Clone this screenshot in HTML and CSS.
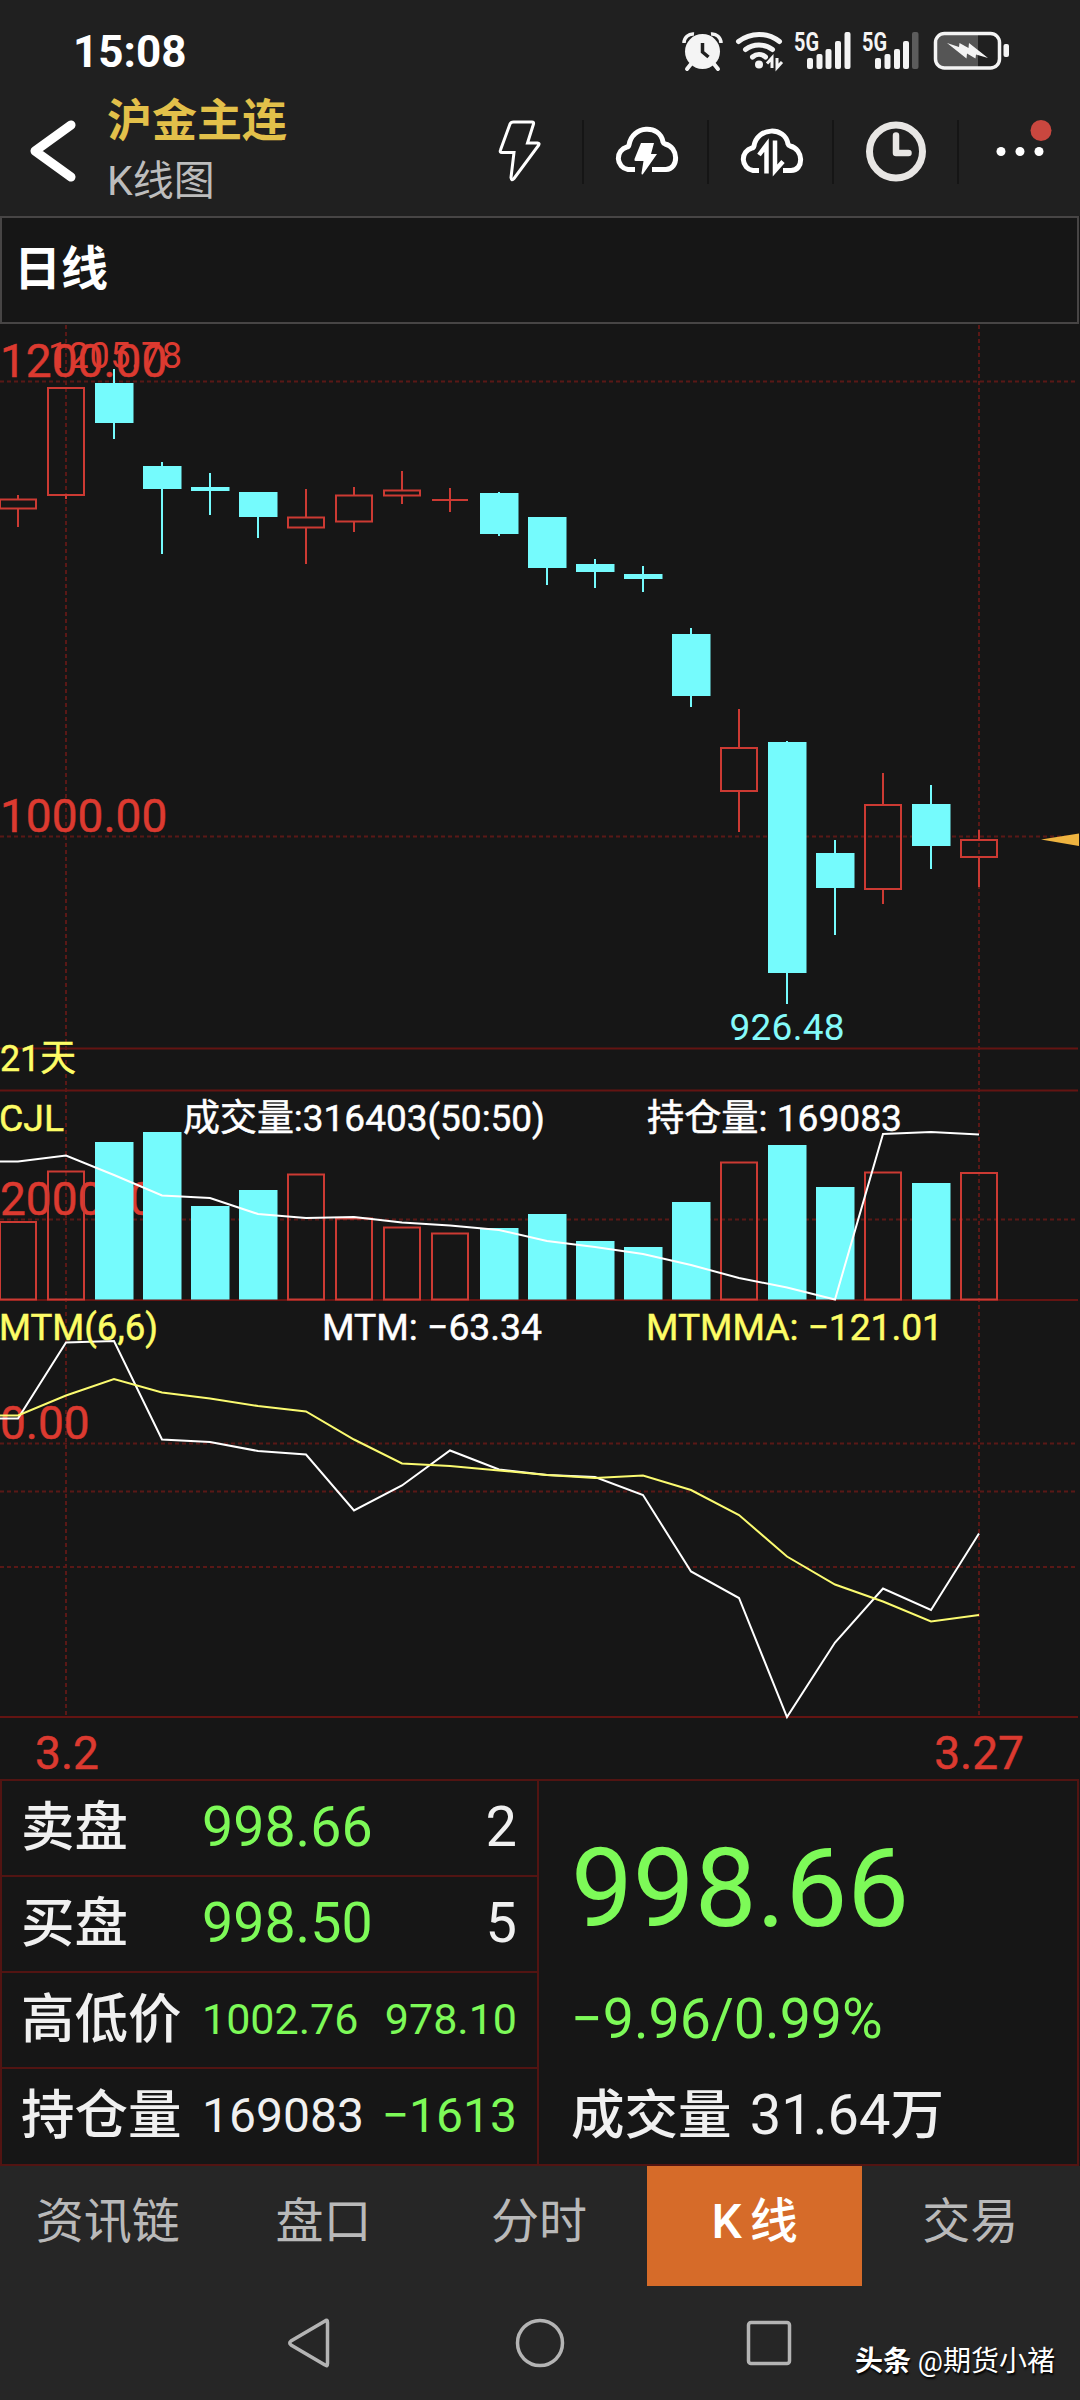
FILE: index.html
```html
<!DOCTYPE html>
<html lang="zh-CN">
<head>
    <meta charset="UTF-8">
    <meta name="viewport" content="width=device-width, initial-scale=1.0">
    <title>沪金主连 K线图</title>
    <link rel="stylesheet" href="styles.css">
</head>
<body>
    <div class="status-bar">
        <span class="time">15:08</span>
        <svg class="status-icons" width="330" height="44" viewBox="682 28 330 44">
            <!-- alarm -->
            <g fill="#f4f4f4">
                <circle cx="702.500" cy="51.500" r="17.500"/>
                <path d="M684 43a9 9 0 0 1 10-9M721 43a9 9 0 0 0-10-9" fill="none" stroke="#f4f4f4" stroke-width="3.500"/>
                <path d="M691 64l-4 5M714 64l4 5" stroke="#f4f4f4" stroke-width="4" stroke-linecap="round"/>
                <path d="M702.500 43v9l6 5" fill="none" stroke="#202020" stroke-width="3.500"/>
            </g>
            <!-- wifi -->
            <g fill="none" stroke="#f4f4f4" stroke-width="5" stroke-linecap="round">
                <path d="M738.500 41.500c12-9.500 29-9.500 41 0"/>
                <path d="M745.500 49.500c8-6 19-6 27 0"/>
                <path d="M752.500 57c4-3.500 9-3.500 13 0"/>
            </g>
            <circle cx="759" cy="64.500" r="4" fill="#f4f4f4"/>
            <path d="M772 68V58l-5 5.500M777 58v9.500l5-5.500" fill="none" stroke="#f4f4f4" stroke-width="3"/>
            <!-- signal -->
            <g fill="#f4f4f4">
                <text class="net" x="794" y="50.500" textLength="25" lengthAdjust="spacingAndGlyphs">5G</text>
                <rect x="807" y="58" width="6" height="11" rx="2"/>
                <rect x="816.500" y="54" width="6" height="15" rx="2"/>
                <rect x="825.500" y="49" width="6" height="20" rx="2"/>
                <rect x="835" y="41" width="6" height="28" rx="2"/>
                <rect x="844.500" y="32" width="6" height="37" rx="2"/>
                <text class="net" x="862" y="50.500" textLength="25" lengthAdjust="spacingAndGlyphs">5G</text>
                <rect x="875" y="58" width="6" height="11" rx="2"/>
                <rect x="884.500" y="54" width="6" height="15" rx="2"/>
                <rect x="894" y="49" width="6" height="20" rx="2"/>
                <rect x="903" y="41" width="6" height="28" rx="2"/>
                <rect x="912" y="32" width="6.500" height="37" rx="2" fill="#5c5c5c"/>
            </g>
            <!-- battery -->
            <path d="M945 35h33v32h-33a8 8 0 0 1-8-8V43a8 8 0 0 1 8-8z" fill="#555"/>
            <rect x="935.500" y="33.500" width="64" height="34.500" rx="9" fill="none" stroke="#f4f4f4" stroke-width="3.500"/>
            <rect x="1003.500" y="44" width="5.500" height="13" rx="2" fill="#f4f4f4"/>
            <path d="M947 43l12 4 .500-4 9 5 .500-5 19 15-12-3.500-.500 4-8.500-5-.500 5z" fill="#f4f4f4"/>
        </svg>
    </div>

    <div class="header">
        <svg class="back" width="46" height="62" viewBox="0 0 46 62">
            <path d="M41 5L5 31l36 26" fill="none" stroke="#fff" stroke-width="9" stroke-linecap="round" stroke-linejoin="round"/>
        </svg>
        <div class="titles">
            <div class="title">沪金主连</div>
            <div class="subtitle">K线图</div>
        </div>
        <div class="tools">
            <div class="tool">
                <svg width="64" height="64" viewBox="0 0 64 64">
                    <path d="M25.500 2h18.500q2 0 1.500 2l-6 19h10q2.500 0 1 2.500L26 58.500q-2.500 3-3-1l3-25H14q-2.500 0-1.500-2.500l9.500-26q.800-2 3.500-2z" fill="none" stroke="#fff" stroke-width="3"/>
                </svg>
            </div>
            <div class="tool">
                <svg width="64" height="64" viewBox="0 0 64 64">
                    <path d="M21 49.500H14a11.500 11.500 0 0 1-1-22.500q1.500 0 2-2C18 5 46 4 49 22q.500 1.500 2 2c14 3 14 25 1 25.500H38" fill="none" stroke="#fff" stroke-width="5"/>
                    <path d="M27 23h13l-3 11h6L29 54q-1.500 1.500-1.500-1l2-12h-8q-1.500 0-1-2z" fill="#fff"/>
                </svg>
            </div>
            <div class="tool">
                <svg width="64" height="64" viewBox="0 0 64 64">
                    <path d="M20 50.500H14a11.500 11.500 0 0 1-1-22.500q1.500 0 2-2C18 7 46 6 49 24q.500 1.500 2 2c14 3 14 24.500 1 24.500H44" fill="none" stroke="#fff" stroke-width="5"/>
                    <path d="M27.500 53.500V25L20 35M36 20.500v30l8-9" fill="none" stroke="#fff" stroke-width="4.500"/>
                </svg>
            </div>
            <div class="tool">
                <svg width="64" height="64" viewBox="0 0 64 64">
                    <circle cx="32" cy="31.500" r="26.500" fill="none" stroke="#e8e6e4" stroke-width="7"/>
                    <path d="M32 15.500v17.500h12.500" fill="none" stroke="#e8e6e4" stroke-width="6.500" stroke-linecap="round" stroke-linejoin="round"/>
                </svg>
            </div>
            <div class="tool">
                <svg width="64" height="64" viewBox="0 0 64 64">
                    <circle cx="12" cy="31.500" r="4.500" fill="#fff"/>
                    <circle cx="31" cy="31.500" r="4.500" fill="#fff"/>
                    <circle cx="50" cy="31.500" r="4.500" fill="#fff"/>
                    <circle cx="52" cy="10.500" r="10.500" fill="#c9473f"/>
                </svg>
            </div>
        </div>
    </div>

    <div class="period">日线</div>

    <svg class="chart" id="chart" width="1080" height="1455" viewBox="0 324 1080 1455">
        <g class="grid">
            <path class="dash" d="M0 381.500H1078M0 836.500H1078M0 1219.500H1078M0 1443.500H1078M0 1491.500H1078M0 1567H1078M66 325V1717M979 325V1717"/>
            <path d="M0 1048.500H1078M0 1090.500H1078M0 1300H1078M0 1717H1078"/>
        </g>
        <g class="axis">
            <text x="0" y="377">1200.00</text>
            <text x="0" y="832">1000.00</text>
            <text x="0" y="1215">200000</text>
            <text x="0" y="1438.500">0.00</text>
            <text x="67" y="1769" text-anchor="middle">3.2</text>
            <text x="979" y="1769" text-anchor="middle">3.27</text>
        </g>
        <g id="series"></g>
        <path d="M1041 839.500L1079 833.500V846z" fill="#efb440"/>
        <text class="peak" x="115" y="368" text-anchor="middle" textLength="134">1205.78</text>
        <text class="low" x="787" y="1039.500" text-anchor="middle" textLength="115">926.48</text>
        <g class="legend">
            <text class="yellow" x="0" y="1070.500" textLength="76" lengthAdjust="spacingAndGlyphs">21天</text>
            <text class="yellow" x="-1" y="1131" textLength="65" lengthAdjust="spacingAndGlyphs">CJL</text>
            <text x="183" y="1131" textLength="362" lengthAdjust="spacingAndGlyphs">成交量:316403(50:50)</text>
            <text x="647" y="1131" textLength="255" lengthAdjust="spacingAndGlyphs">持仓量: 169083</text>
            <text class="yellow" x="-1" y="1340" textLength="159" lengthAdjust="spacingAndGlyphs">MTM(6,6)</text>
            <text x="322" y="1340" textLength="220" lengthAdjust="spacingAndGlyphs">MTM: −63.34</text>
            <text class="yellow" x="646" y="1340" textLength="297" lengthAdjust="spacingAndGlyphs">MTMMA: −121.01</text>
        </g>
    </svg>

    <div class="quote">
        <div class="quote-left">
            <div class="row"><span class="name">卖盘</span><span class="price green">998.66</span><span class="qty">2</span></div>
            <div class="row"><span class="name">买盘</span><span class="price green">998.50</span><span class="qty">5</span></div>
            <div class="row range"><span class="name">高低价</span><span class="price green">1002.76</span><span class="qty green">978.10</span></div>
            <div class="row hold"><span class="name">持仓量</span><span class="price">169083</span><span class="qty green">−1613</span></div>
        </div>
        <div class="quote-right">
            <div class="last green">998.66</div>
            <div class="change green">−9.96/0.99%</div>
            <div class="volume">成交量 <span>31.64</span>万</div>
        </div>
    </div>

    <div class="tabs">
        <div class="tab">资讯链</div>
        <div class="tab">盘口</div>
        <div class="tab">分时</div>
        <div class="tab active">K 线</div>
        <div class="tab">交易</div>
    </div>

    <div class="nav-bar">
        <svg width="1080" height="114" viewBox="0 2286 1080 114" fill="none" stroke="#b4b4b4" stroke-width="3.500">
            <path d="M325 2321q2.500-2 2.500 1.500v41q0 3.500-2.500 1.500L291 2345q-2.500-2 0-4z"/>
            <circle cx="540" cy="2343" r="22.500"/>
            <rect x="748.500" y="2322.500" width="41" height="41" rx="2.500"/>
        </svg>
        <div class="watermark"><b>头条</b> @期货小褚</div>
    </div>

    <script src="chart.js"></script>
</body>
</html>
```

FILE: styles.css
```css
body {
    margin: 0;
    width: 1080px;
    height: 2400px;
    overflow: hidden;
    background-color: #161616;
    color: #f0f0f0;
    font-family: Roboto, "Noto Sans CJK SC", sans-serif;
}
.status-bar {
    display: flex;
    align-items: flex-start;
    justify-content: space-between;
    box-sizing: border-box;
    height: 96px;
    padding: 28px 68px 0 73px;
    background-color: #202020;
}
.time {
    font-size: 44px;
    font-weight: bold;
    line-height: 48px;
    color: #fff;
}
.status-icons {
    display: block;
}
.net {
    font-size: 25px;
    font-weight: bold;
}
.header {
    display: flex;
    box-sizing: border-box;
    height: 120px;
    padding-left: 30px;
    background-color: #202020;
}
.back {
    margin-top: 24px;
    margin-right: 31px;
}
.titles {
    flex: 1;
}
.title {
    padding-top: 1px;
    font-size: 45px;
    font-weight: bold;
    line-height: 50px;
    color: #e2c04a;
}
.subtitle {
    margin-top: 11px;
    font-size: 41px;
    line-height: 46px;
    color: #bdbdbd;
}
.tools {
    display: flex;
    height: 64px;
    margin-top: 24px;
    margin-right: -2px;
}
.tool {
    display: flex;
    align-items: center;
    justify-content: center;
    box-sizing: border-box;
    width: 125px;
    border-left: 2px solid #151515;
}
.tool:first-child {
    border-left: none;
}
.tool svg {
    overflow: visible;
}
.period {
    box-sizing: border-box;
    height: 108px;
    margin-right: 1px;
    padding-left: 12px;
    border: 2px solid #474545;
    font-size: 47px;
    font-weight: bold;
    line-height: 102px;
    color: #fff;
}

/* chart */
.chart {
    display: block;
}
.grid path {
    fill: none;
    stroke: #641412;
    stroke-width: 2;
}
.grid .dash {
    stroke: #5a1816;
    stroke-dasharray: 4 3;
}
.axis text {
    font-size: 46px;
    fill: #dc3a30;
    stroke: #dc3a30;
    stroke-width: .5;
}
.up {
    fill: none;
    stroke: #cc3a33;
    stroke-width: 2;
}
.down {
    fill: #75fbfd;
    stroke: none;
}
.line {
    fill: none;
    stroke: #fff;
    stroke-width: 2;
}
.line.ma {
    stroke: #fbfb70;
}
.peak {
    font-size: 36px;
    fill: #dc3a30;
}
.low {
    font-size: 37px;
    fill: #84fafa;
}
.legend text {
    font-size: 37px;
    fill: #fff;
    stroke: #fff;
    stroke-width: .5;
}
.legend .yellow {
    fill: #fdfd66;
    stroke: #fdfd66;
}

/* quote */
.quote {
    display: flex;
    box-sizing: border-box;
    height: 387px;
    margin-right: 1px;
    border: 2px solid #521412;
}
.quote-left {
    width: 535px;
    border-right: 2px solid #521412;
}
.row {
    display: flex;
    align-items: baseline;
    box-sizing: border-box;
    height: 96px;
    padding: 0 20px 0 19px;
    border-bottom: 2px solid #521412;
    line-height: 93px;
}
.row:last-child {
    border-bottom: none;
}
.name {
    width: 181px;
    font-size: 53.5px;
    font-weight: 500;
}
.price {
    font-size: 55.5px;
}
.qty {
    margin-left: auto;
    font-size: 56px;
}
.range .price,
.range .qty {
    position: relative;
    top: -4px;
    font-size: 43px;
}
.hold .price,
.hold .qty {
    position: relative;
    top: -2px;
    font-size: 48px;
}
.green {
    color: #7dfa58;
}
.quote-right {
    padding-left: 32px;
}
.last {
    margin-top: 43px;
    font-size: 110px;
    line-height: 130px;
}
.change {
    margin-top: 34px;
    font-size: 55.5px;
    line-height: 64px;
}
.volume {
    margin-top: 28px;
    font-size: 53.5px;
    font-weight: 500;
    line-height: 70px;
}
.volume span {
    margin-left: 5px;
    font-size: 56px;
    font-weight: 400;
}

/* bottom */
.tabs {
    display: flex;
    height: 120px;
    padding-right: 2px;
    background-color: #262626;
}
.tab {
    flex: 1;
    font-size: 48px;
    line-height: 112px;
    text-align: center;
    color: #b9b9b9;
}
.tab.active {
    background-color: #d66b29;
    color: #fff;
    font-weight: 500;
    word-spacing: -4px;
}
.nav-bar {
    position: relative;
    height: 114px;
    background-color: #262626;
}
.watermark {
    position: absolute;
    right: 25px;
    top: 56px;
    font-size: 28px;
    line-height: 40px;
    color: #fff;
    text-shadow: 1px 2px 2px #000;
}
```

FILE: chart.js
```javascript
// [up, body top, body bottom, wick top, wick bottom, volume top]
const bars = [
    [1, 499.5, 508.5, 495, 527, 1222],
    [1, 388, 495, 387, 499, 1171.5],
    [0, 383, 423, 369, 439, 1142],
    [0, 466, 489, 462, 554, 1132],
    [0, 487, 491, 473, 515, 1206],
    [0, 492, 517, 492, 538, 1190],
    [1, 517.5, 527.5, 489, 564, 1174.5],
    [1, 495.5, 521.5, 487, 532, 1218.5],
    [1, 490.5, 495.5, 471, 504, 1227.5],
    [1, 500, 500, 488, 512, 1233.5],
    [0, 493, 534, 492, 536, 1228],
    [0, 517, 568, 517, 585, 1214],
    [0, 564, 572, 559, 588, 1241],
    [0, 574, 579, 566, 592, 1247],
    [0, 634, 696, 628, 707, 1202],
    [1, 748, 791, 709, 832, 1162.5],
    [0, 742, 973, 741, 1004, 1145],
    [0, 853, 888, 840, 935, 1187],
    [1, 805, 889, 773, 904, 1172.5],
    [0, 804, 846, 785, 869, 1183],
    [1, 840, 857, 830, 887, 1173]
];
const openInterest = [1161.5, 1155.5, 1175, 1195.5, 1198, 1214, 1218, 1217, 1222.5, 1225.5, 1230, 1241, 1247, 1254, 1265, 1278, 1287.5, 1299.5, 1134, 1132, 1134.5];
const mtm = [1418.5, 1342.5, 1341, 1439.5, 1442, 1451, 1454.5, 1510.5, 1485.5, 1450.5, 1469.5, 1475, 1477, 1495, 1571.5, 1598, 1717, 1642.5, 1588.5, 1610, 1533.5];
const mtmma = [1415.5, 1395.5, 1379, 1392.5, 1398.5, 1406, 1411.5, 1439.5, 1463.5, 1466, 1470.5, 1475, 1478, 1475.5, 1490, 1515, 1556.5, 1584.5, 1601.5, 1621.5, 1615];

const BASE = 1299.5;
const xOf = i => Math.round(18 + i * 48.05);

function line(values, cls) {
    const points = values.map((y, i) => `${xOf(i)},${y}`).join(' ');
    return `<polyline class="line ${cls}" points="0,${values[0]} ${points}"/>`;
}

let html = '';
bars.forEach(([up, top, bottom, high, low, vol], i) => {
    const x = xOf(i);
    if (up) {
        html += `<path class="up" d="M${x - 18} ${top}h36V${bottom}h-36zM${x} ${high}V${top}M${x} ${bottom}V${low}"/>`;
        html += `<path class="up" d="M${x - 18} ${vol}h36V${BASE}h-36z"/>`;
    } else {
        html += `<rect class="down" x="${x - 19}" y="${top}" width="38.500" height="${bottom - top}"/>`;
        html += `<rect class="down" x="${x - 1}" y="${high}" width="2" height="${low - high}"/>`;
        html += `<rect class="down" x="${x - 19}" y="${vol}" width="38.500" height="${BASE - vol}"/>`;
    }
});
html += line(openInterest, '') + line(mtm, '') + line(mtmma, 'ma');
document.getElementById('series').innerHTML = html;
```
